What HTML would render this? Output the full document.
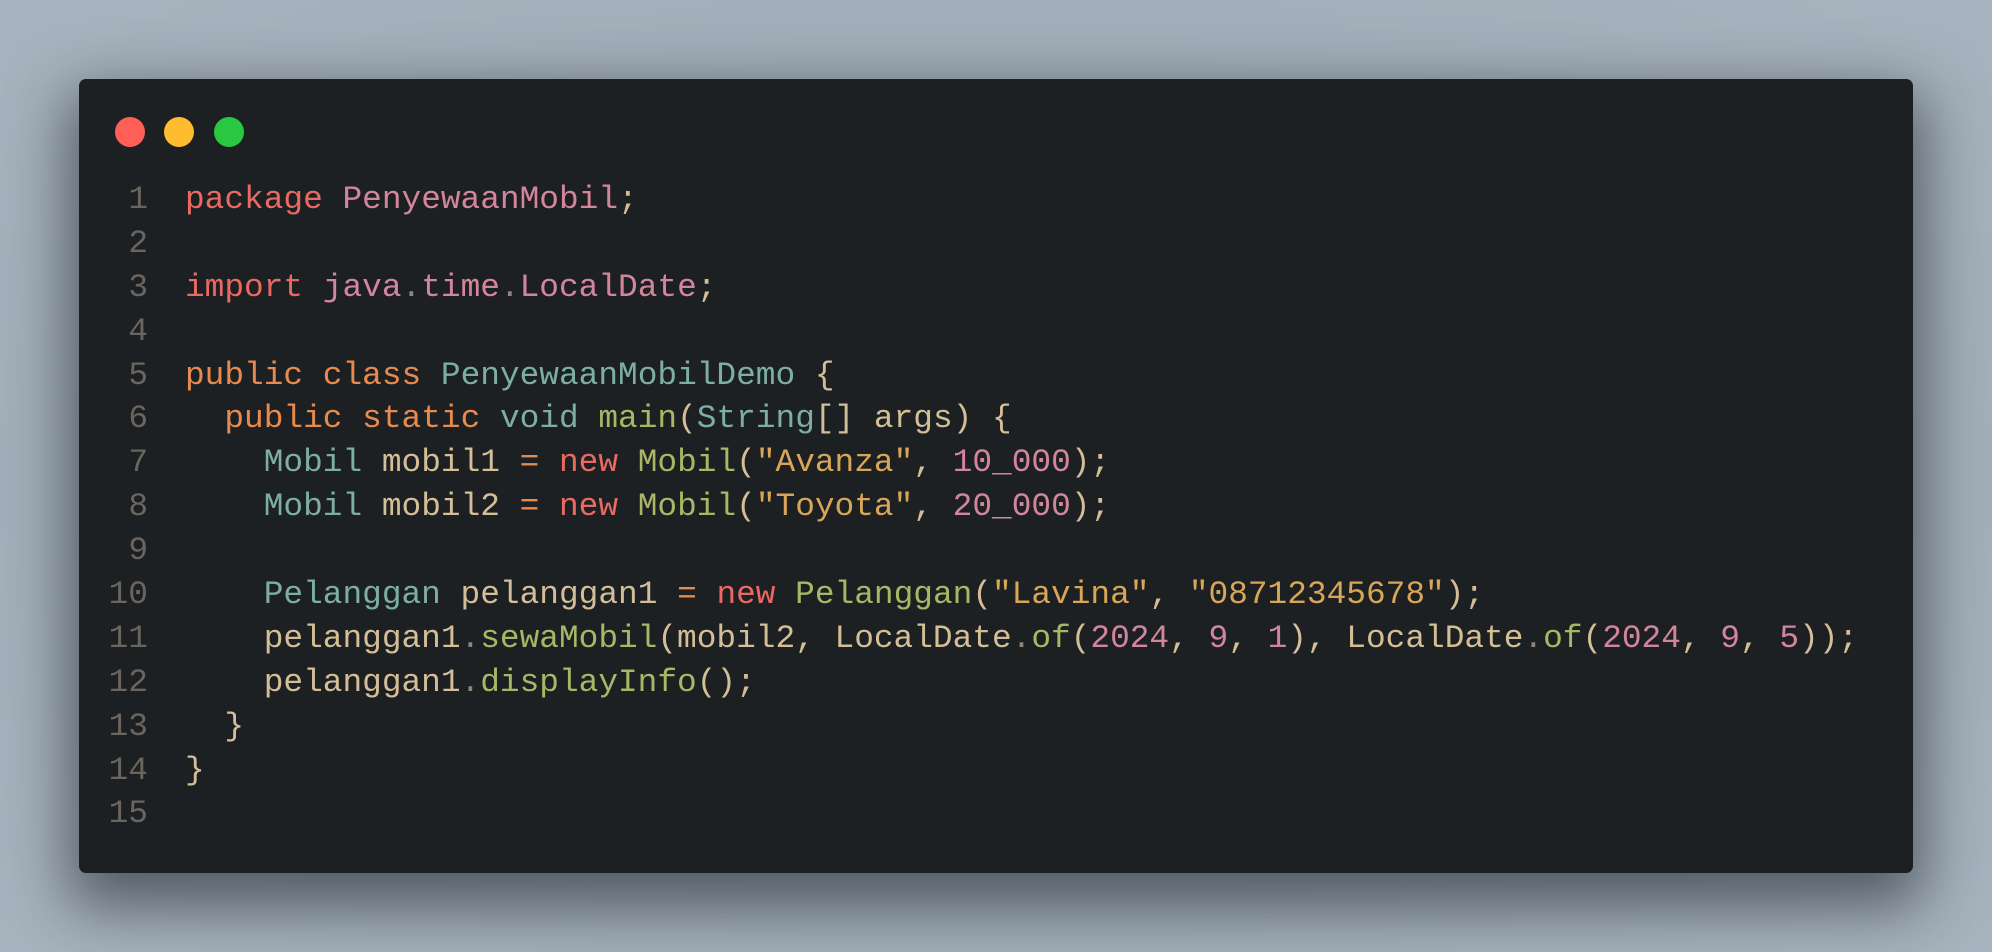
<!DOCTYPE html>
<html><head><meta charset="utf-8"><style>
html,body{margin:0;padding:0}
html{overflow:hidden}
body{width:1992px;height:952px;overflow:hidden;background:radial-gradient(ellipse at center,#97a3ae 0%,#a7b3be 100%);position:relative;font-family:"Liberation Mono","DejaVu Sans Mono",monospace}
.win{position:absolute;left:79px;top:79px;width:1834px;height:794px;background:#1d2022;border-radius:7px;box-shadow:0 24px 60px 10px rgba(30,35,45,0.6)}
.dot{position:absolute;top:117px;width:30px;height:30px;border-radius:50%}
.code{position:absolute;left:0;top:178px;width:1992px;font-size:32.8px;line-height:43.9px;color:#d4be98}
.ln{position:absolute;left:100px;width:48px;text-align:right;color:#6b6560}
.row{height:43.9px;position:relative}
.tx{position:absolute;left:185px;white-space:pre}
.k{color:#ea6962}.o{color:#e78a4e}.t{color:#7daea3}.p{color:#d3869b}.f{color:#a9b665}.s{color:#d8a657}.n{color:#d3869b}.d{color:#928374}
</style></head><body>
<div class="win"></div>
<div class="dot" style="left:115px;background:#ff5f57"></div>
<div class="dot" style="left:164px;background:#febc2e"></div>
<div class="dot" style="left:214px;background:#28c840"></div>
<div class="code"><div class="row"><span class="ln">1</span><span class="tx"><span class="k">package</span> <span class="p">PenyewaanMobil</span>;</span></div><div class="row"><span class="ln">2</span></div><div class="row"><span class="ln">3</span><span class="tx"><span class="k">import</span> <span class="p">java</span><span class="d">.</span><span class="p">time</span><span class="d">.</span><span class="p">LocalDate</span>;</span></div><div class="row"><span class="ln">4</span></div><div class="row"><span class="ln">5</span><span class="tx"><span class="o">public</span> <span class="o">class</span> <span class="t">PenyewaanMobilDemo</span> {</span></div><div class="row"><span class="ln">6</span><span class="tx">  <span class="o">public</span> <span class="o">static</span> <span class="t">void</span> <span class="f">main</span>(<span class="t">String</span>[] args) {</span></div><div class="row"><span class="ln">7</span><span class="tx">    <span class="t">Mobil</span> mobil1 <span class="o">=</span> <span class="k">new</span> <span class="f">Mobil</span>(<span class="s">"Avanza"</span>, <span class="n">10_000</span>);</span></div><div class="row"><span class="ln">8</span><span class="tx">    <span class="t">Mobil</span> mobil2 <span class="o">=</span> <span class="k">new</span> <span class="f">Mobil</span>(<span class="s">"Toyota"</span>, <span class="n">20_000</span>);</span></div><div class="row"><span class="ln">9</span></div><div class="row"><span class="ln">10</span><span class="tx">    <span class="t">Pelanggan</span> pelanggan1 <span class="o">=</span> <span class="k">new</span> <span class="f">Pelanggan</span>(<span class="s">"Lavina"</span>, <span class="s">"08712345678"</span>);</span></div><div class="row"><span class="ln">11</span><span class="tx">    pelanggan1<span class="d">.</span><span class="f">sewaMobil</span>(mobil2, LocalDate<span class="d">.</span><span class="f">of</span>(<span class="n">2024</span>, <span class="n">9</span>, <span class="n">1</span>), LocalDate<span class="d">.</span><span class="f">of</span>(<span class="n">2024</span>, <span class="n">9</span>, <span class="n">5</span>));</span></div><div class="row"><span class="ln">12</span><span class="tx">    pelanggan1<span class="d">.</span><span class="f">displayInfo</span>();</span></div><div class="row"><span class="ln">13</span><span class="tx">  }</span></div><div class="row"><span class="ln">14</span><span class="tx">}</span></div><div class="row"><span class="ln">15</span></div></div>
</body></html>
